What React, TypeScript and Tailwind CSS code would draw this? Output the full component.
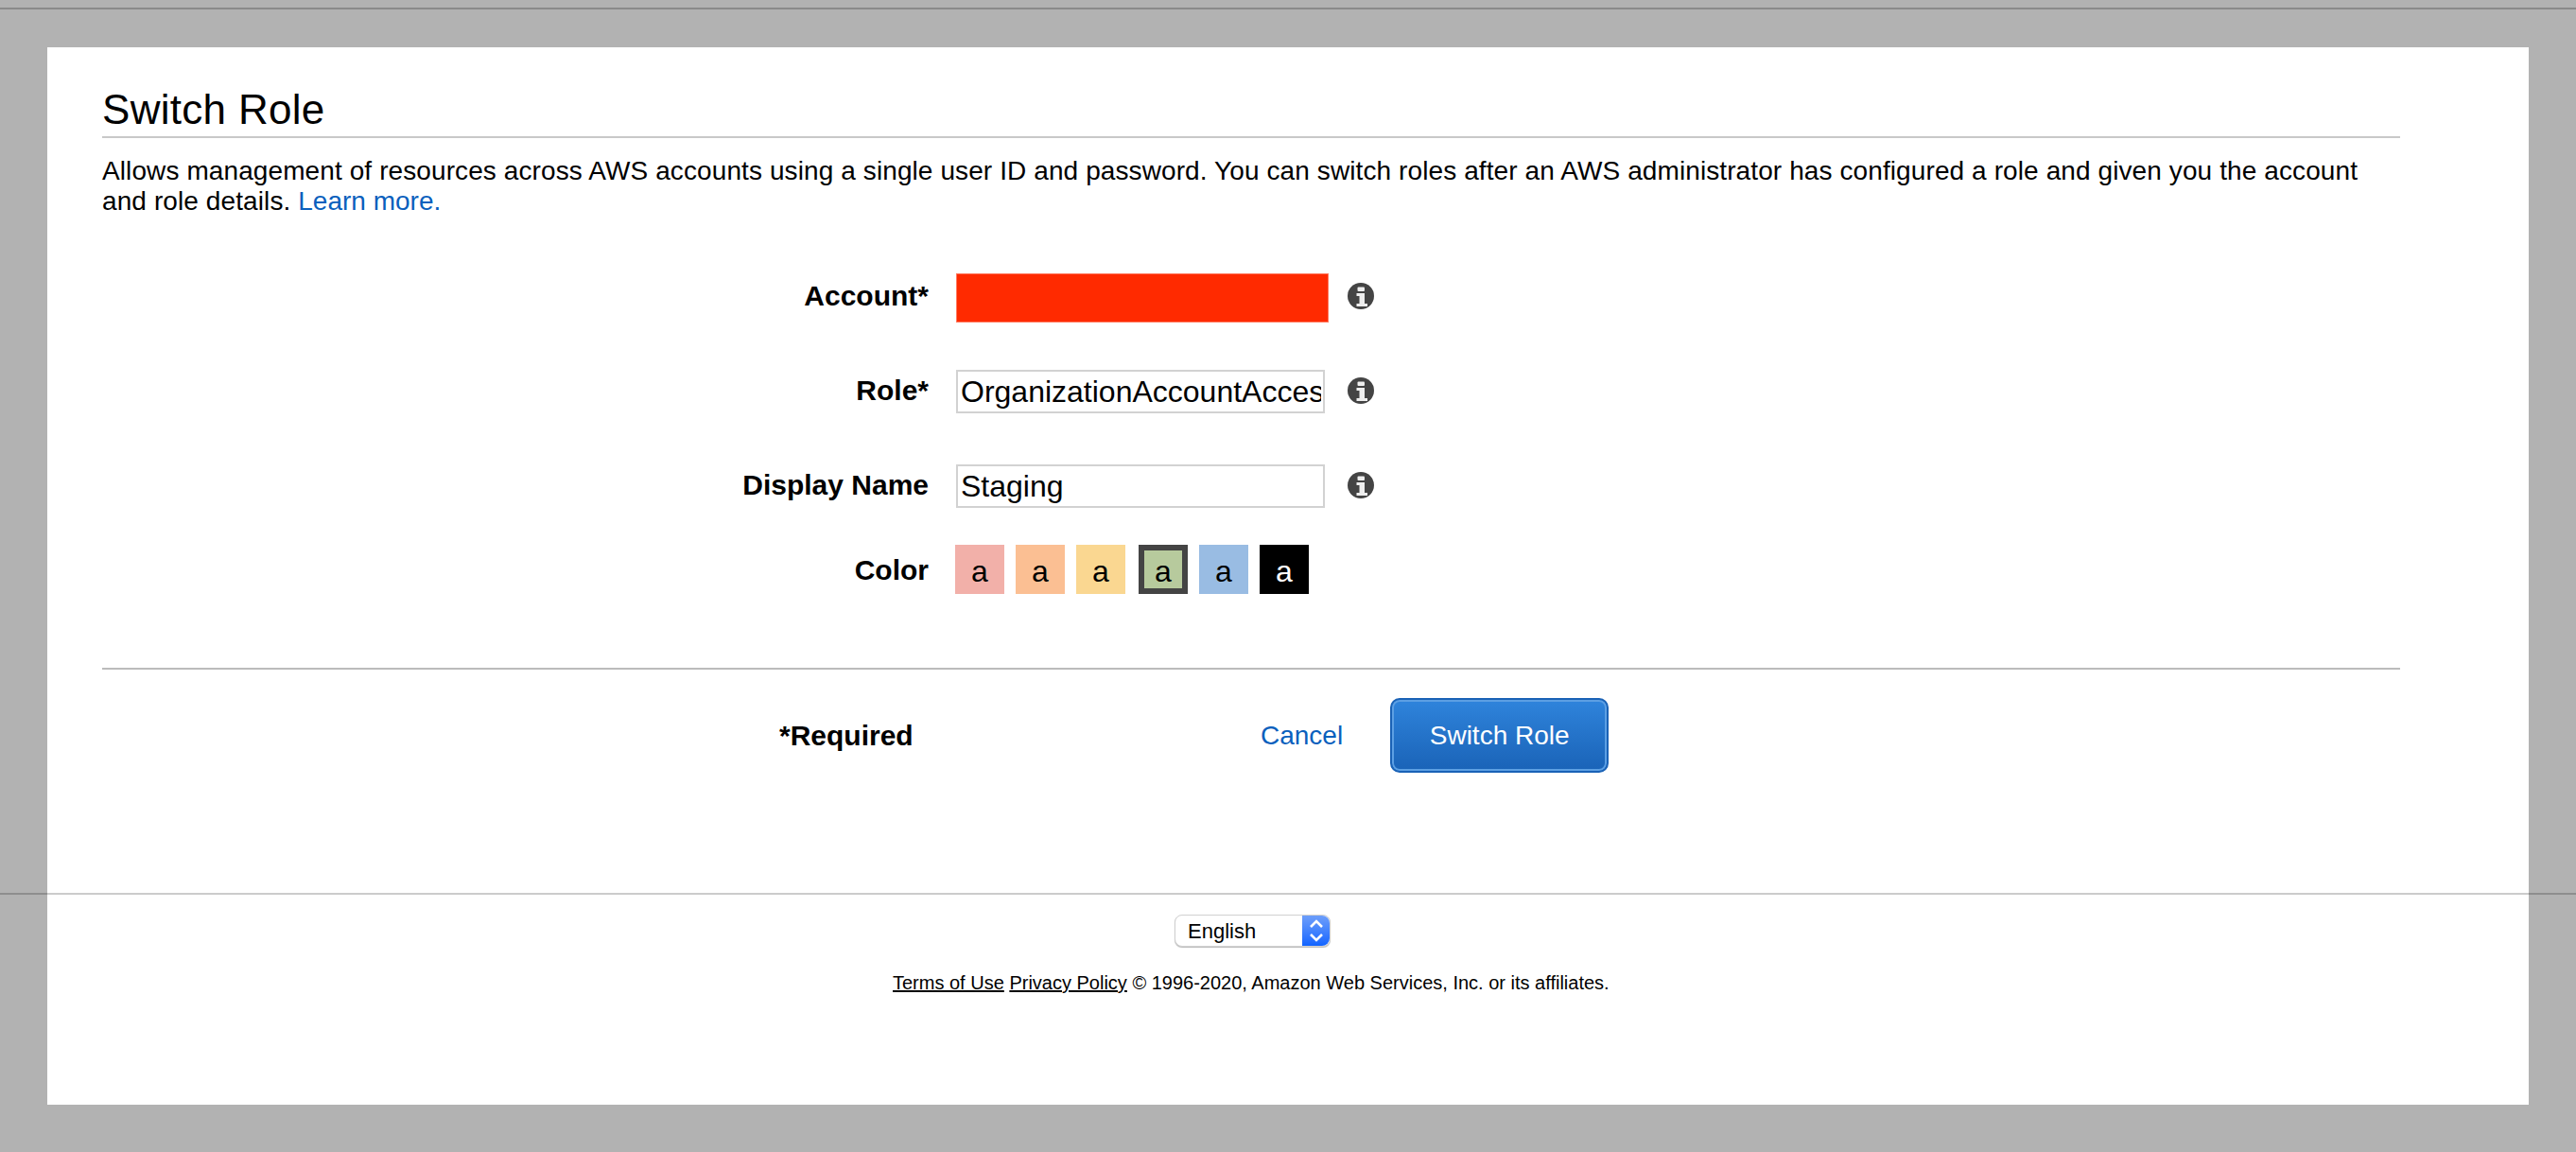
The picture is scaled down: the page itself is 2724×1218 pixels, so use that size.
const swatches = [
  { bg: "bg-[#f2b0a9]", gap: "ml-0" },
  { bg: "bg-[#fbbf93]", gap: "ml-3" },
  { bg: "bg-[#fad791]", gap: "ml-3" },
  { bg: "bg-[#b7ca9d]", gap: "ml-[14px]", selected: true },
  { bg: "bg-[#99bce3]", gap: "ml-3" },
  { bg: "bg-black", gap: "ml-3", dark: true },
]

function Label({ children, className = "" }: { children: string; className?: string }) {
  return <label className={`w-[874px] shrink-0 text-right text-[30px] font-bold leading-9 ${className}`}>{children}</label>
}

function InfoIcon() {
  return (
    <svg viewBox="0 0 28 28" className="ml-5 size-[28px] shrink-0">
      <circle cx="14" cy="14" r="14" fill="#444" />
      <rect x="10.5" y="4.5" width="7.5" height="4.5" rx="1" fill="#eee" />
      <path d="M9.5 11H18V22h3v3H9.5v-3h3v-8h-3z" fill="#eee" />
    </svg>
  )
}

function TextField({ value }: { value: string }) {
  return (
    <input
      readOnly
      value={value}
      className="ml-[29px] mt-[2px] mr-1 h-[46px] w-[390px] shrink-0 border-2 border-[#d2d2d2] bg-white pl-[3px] pr-[2px] text-[32px] text-black outline-none"
    />
  )
}

export default function App() {
  return (
    <div className="relative h-[1218px] overflow-hidden bg-[#b2b2b2] font-['Liberation_Sans',Arial,sans-serif] text-black">
      <div className="pt-2">
        <div className="h-0.5 bg-[#8a8a8a]" />
      </div>

      <main className="mx-[50px] mt-10 h-[1118px] bg-white">
        <div className="ml-[58px] mr-[136px]">
          <h1 className="flex h-[96px] items-end border-b-2 border-[#c8c8c8] pb-[2px] text-[44px] leading-[52px] tracking-[0.3px]">
            Switch Role
          </h1>
          <p className="mt-[19px] text-[28px] leading-8 tracking-[0.1px]">
            Allows management of resources across AWS accounts using a single user ID and password. You can switch roles
            after an AWS administrator has configured a role and given you the account and role details.{" "}
            <a className="tracking-normal text-[#0a60bd]">Learn more.</a>
          </p>

          <div className="mt-[34px] flex h-[100px] items-center">
            <Label>Account*</Label>
            <div className="ml-[29px] mt-1 h-[52px] w-[394px] shrink-0 border border-[#ff7a60] bg-[#ff2a00]" />
            <InfoIcon />
          </div>
          <div className="flex h-[100px] items-center">
            <Label>Role*</Label>
            <TextField value="OrganizationAccountAccessRole" />
            <InfoIcon />
          </div>
          <div className="flex h-[100px] items-center">
            <Label>Display Name</Label>
            <TextField value="Staging" />
            <InfoIcon />
          </div>

          <div className="mt-[13px] flex h-[52px] items-center">
            <Label className="pt-0.5">Color</Label>
            <div className="ml-7 flex">
              {swatches.map((s, i) => (
                <span
                  key={i}
                  className={`flex size-[52px] items-center justify-center pt-1 text-[32px] leading-none ${s.bg} ${s.gap} ${
                    s.selected ? "border-[6px] border-[#444]" : ""
                  } ${s.dark ? "text-white" : "text-black"}`}
                >
                  a
                </span>
              ))}
            </div>
          </div>

          <div className="mt-[78px] h-0.5 bg-[#bbb]" />

          <div className="mt-[30px] flex h-[79px] items-center">
            <span className="ml-[716px] w-[509px] shrink-0 text-[30px] font-bold leading-9">*Required</span>
            <a className="text-[28px] leading-8 text-[#0a60bd]">Cancel</a>
            <button className="ml-[50px] h-[79px] w-[231px] rounded-[10px] border-2 border-[#1a62b6] bg-gradient-to-b from-[#2f84dc] to-[#1a63b7] text-[28px] text-white shadow-[inset_0_0_0_2px_#5c9fe3]">
              Switch Role
            </button>
          </div>
        </div>

        <footer className="mt-[150px]">
          <div className="ml-[1192px] flex h-[34px] w-[165px] rounded-lg border border-[#d0d0d0] bg-white shadow-[0_1px_1px_#bbb]">
            <span className="flex-1 pl-[13px] text-[22px] leading-[33px]">English</span>
            <span className="flex w-[29px] items-center justify-center rounded-r-lg bg-gradient-to-b from-[#6d9efa] to-[#0f63ff]">
              <svg width="16" height="26" viewBox="0 0 16 26" fill="none" stroke="white" strokeWidth="2.6">
                <path d="M2 9l6-6 6 6" />
                <path d="M2 17l6 6 6-6" />
              </svg>
            </span>
          </div>
          <p className="ml-[894px] mt-[25px] whitespace-nowrap text-[20px] leading-[26px]">
            <a className="underline">Terms of Use</a> <a className="underline">Privacy Policy</a> © 1996-2020, Amazon Web
            Services, Inc. or its affiliates.
          </p>
        </footer>
      </main>

      <div className="absolute inset-x-0 top-[944px] h-0.5 bg-black/20" />
    </div>
  )
}
